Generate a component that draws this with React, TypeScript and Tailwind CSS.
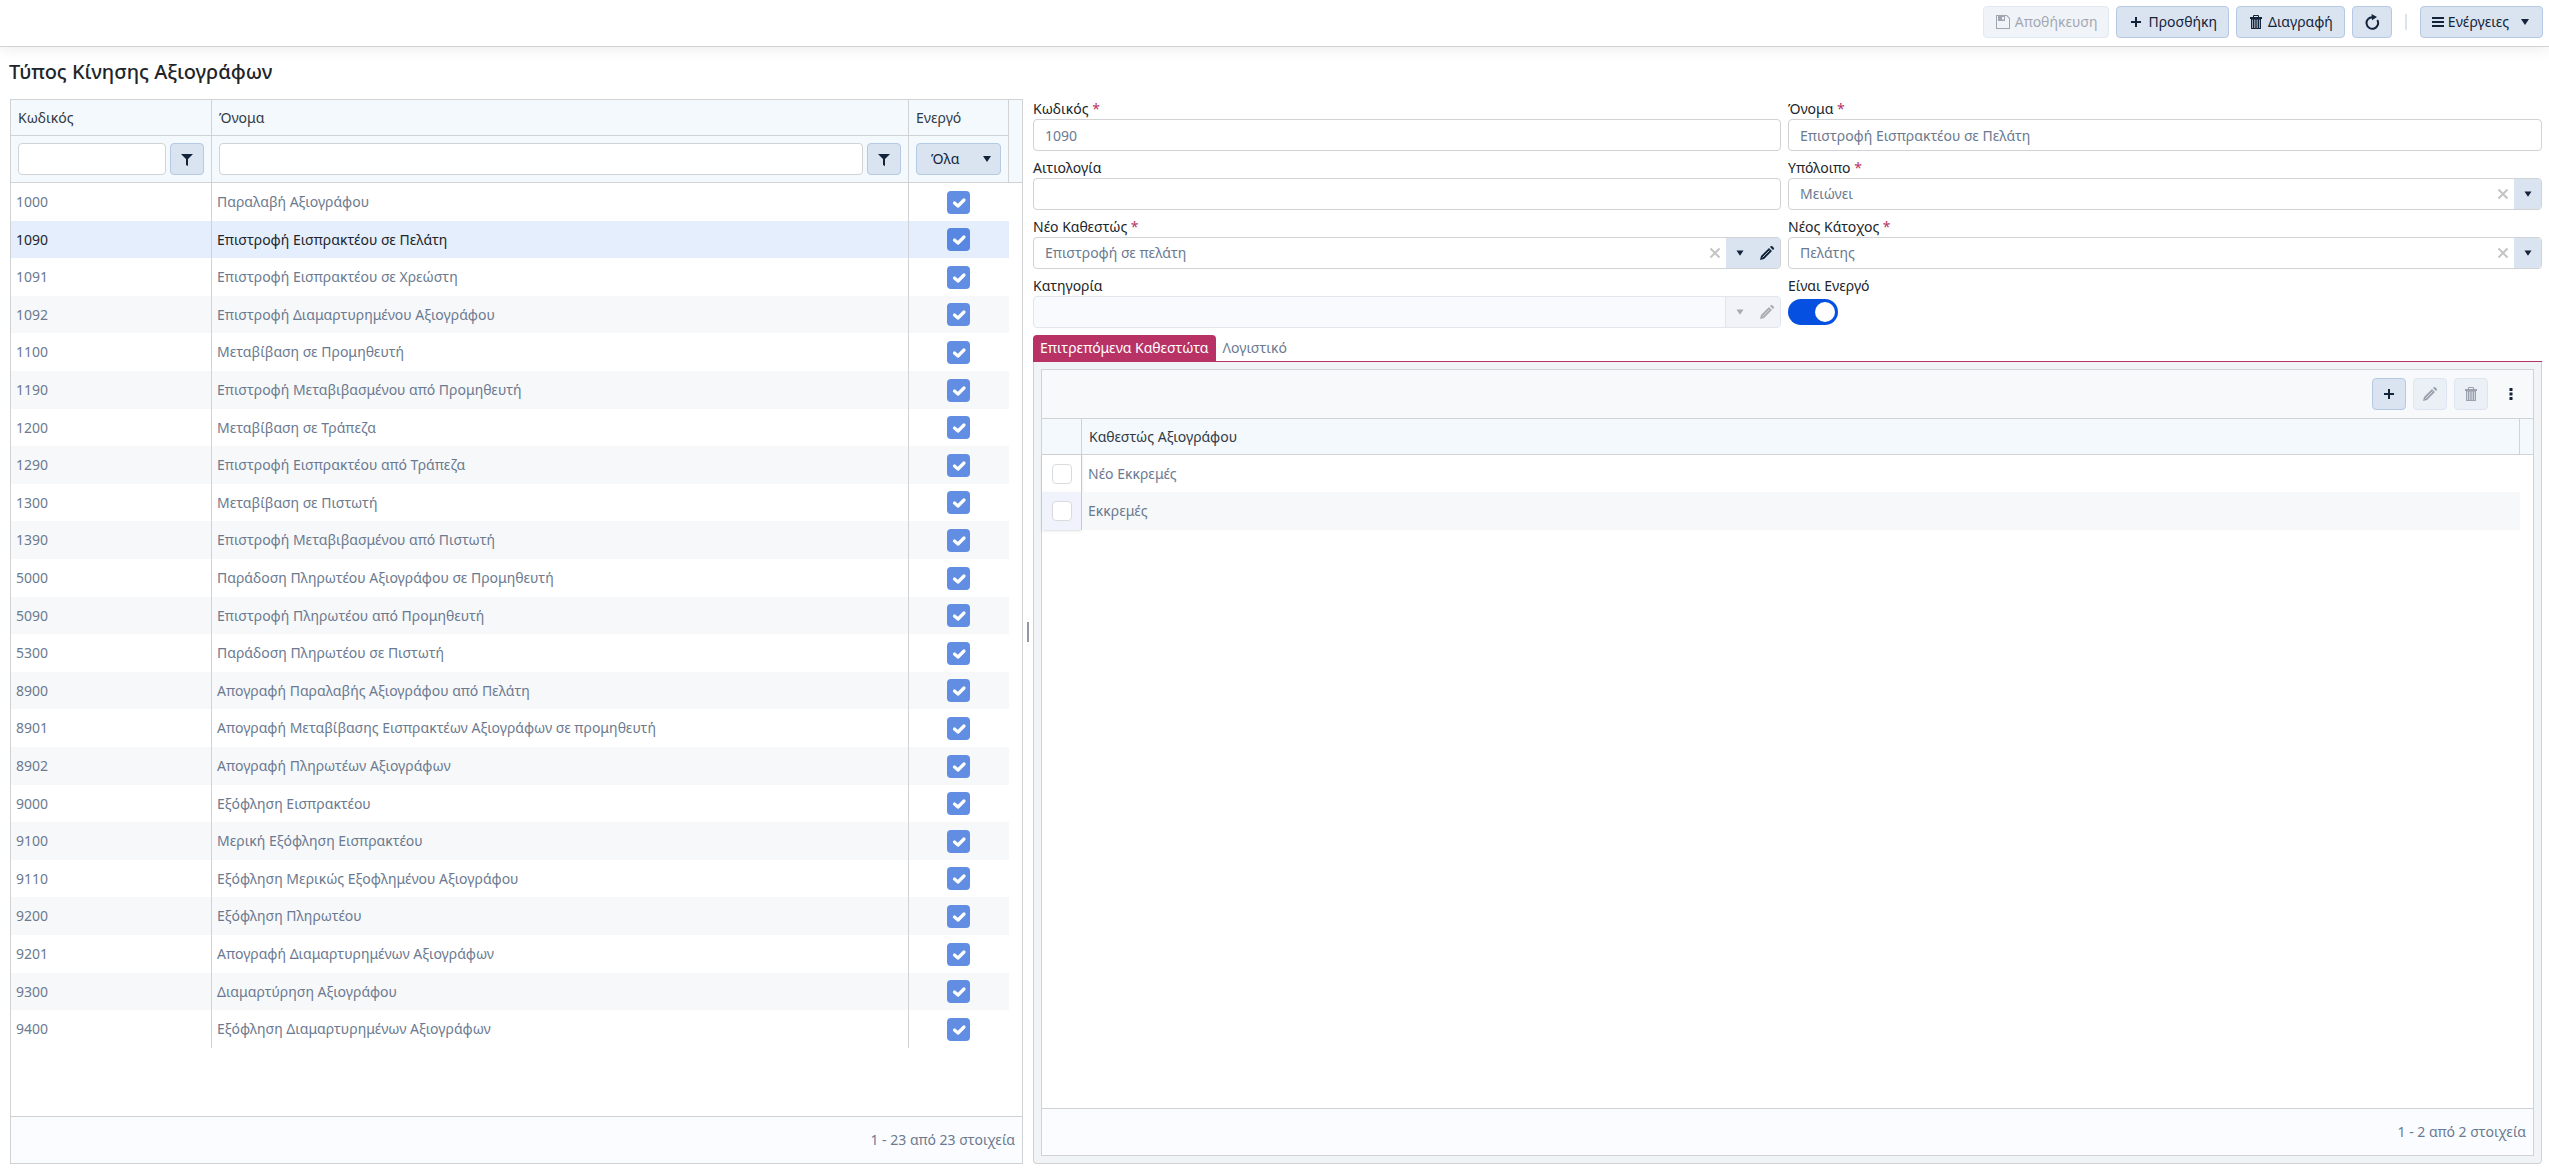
import { useState, type ReactNode } from "react";

const ROWS: [string, string][] = [
  ["1000", "Παραλαβή Αξιογράφου"],
  ["1090", "Επιστροφή Εισπρακτέου σε Πελάτη"],
  ["1091", "Επιστροφή Εισπρακτέου σε Χρεώστη"],
  ["1092", "Επιστροφή Διαμαρτυρημένου Αξιογράφου"],
  ["1100", "Μεταβίβαση σε Προμηθευτή"],
  ["1190", "Επιστροφή Μεταβιβασμένου από Προμηθευτή"],
  ["1200", "Μεταβίβαση σε Τράπεζα"],
  ["1290", "Επιστροφή Εισπρακτέου από Τράπεζα"],
  ["1300", "Μεταβίβαση σε Πιστωτή"],
  ["1390", "Επιστροφή Μεταβιβασμένου από Πιστωτή"],
  ["5000", "Παράδοση Πληρωτέου Αξιογράφου σε Προμηθευτή"],
  ["5090", "Επιστροφή Πληρωτέου από Προμηθευτή"],
  ["5300", "Παράδοση Πληρωτέου σε Πιστωτή"],
  ["8900", "Απογραφή Παραλαβής Αξιογράφου από Πελάτη"],
  ["8901", "Απογραφή Μεταβίβασης Εισπρακτέων Αξιογράφων σε προμηθευτή"],
  ["8902", "Απογραφή Πληρωτέων Αξιογράφων"],
  ["9000", "Εξόφληση Εισπρακτέου"],
  ["9100", "Μερική Εξόφληση Εισπρακτέου"],
  ["9110", "Εξόφληση Μερικώς Εξοφλημένου Αξιογράφου"],
  ["9200", "Εξόφληση Πληρωτέου"],
  ["9201", "Απογραφή Διαμαρτυρημένων Αξιογράφων"],
  ["9300", "Διαμαρτύρηση Αξιογράφου"],
  ["9400", "Εξόφληση Διαμαρτυρημένων Αξιογράφων"],
];

const STATUSES = ["Νέο Εκκρεμές", "Εκκρεμές"];

function Icon({ children, className = "size-4" }: { children: ReactNode; className?: string }) {
  return (
    <svg viewBox="0 0 16 16" aria-hidden="true" fill="currentColor" className={`shrink-0 ${className}`}>
      {children}
    </svg>
  );
}

const SaveIcon = () => (
  <Icon>
    <path fillRule="evenodd" d="M1 1h11l3 3v11H1zM2 2v12h12V4.500L11.500 2H10v5H3V2zM7 3v3h2V3z" />
    <path fillRule="evenodd" d="M3 1h7v6H3zM7 2.500v3h2v-3z" />
  </Icon>
);
const PlusIcon = () => (
  <Icon>
    <path d="M7 3h2v4h4v2H9v4H7V9H3V7h4z" />
  </Icon>
);
const TrashIcon = () => (
  <Icon>
    <path fillRule="evenodd" d="M6 1h4a1 1 0 0 1 1 1v1h3v2H2V3h3V2a1 1 0 0 1 1-1zM6 2v1h4V2z" />
    <path d="M3 5h10v10H3z" fillOpacity=".75" />
    <path d="M3.500 5v9.500h9V5M5.500 5v9M8 5v9M10.500 5v9" fill="none" stroke="currentColor" strokeWidth="1" />
    <path d="M4.500 6v8M6.800 6v8M9.200 6v8M11.500 6v8" fill="none" stroke="#dae3f0" strokeWidth=".6" />
  </Icon>
);
const ReloadIcon = () => (
  <Icon>
    <path d="M8.500 3.200A5.800 5.800 0 1 0 13.300 6" fill="none" stroke="currentColor" strokeWidth="2" />
    <path d="M7.500 0l5.500 3-5 3.200z" />
  </Icon>
);
const MenuIcon = () => (
  <Icon>
    <path d="M2 3h12v2H2zM2 7h12v2H2zM2 11h12v2H2z" />
  </Icon>
);
const CaretIcon = ({ className = "size-4" }: { className?: string }) => (
  <Icon className={className}>
    <path d="M4 5h8l-4 6z" />
  </Icon>
);
const FilterIcon = () => (
  <Icon>
    <path d="M2 3h12L9 8v7l-2-1V8z" />
  </Icon>
);
const PencilIcon = () => (
  <Icon>
    <path d="M1 15l1-4 8-8 3 3-8 8zM11 2l1-1h1l2 2v1l-1 1z" />
    <path d="M3.500 12.500l7-7" stroke="#dae3f0" strokeWidth=".8" />
  </Icon>
);
const KebabIcon = () => (
  <Icon>
    <path d="M6.500 2h3v3h-3zM6.500 6.500h3v3h-3zM6.500 11h3v3h-3z" />
  </Icon>
);
const ClearIcon = () => (
  <Icon>
    <path d="M3.500 3.500l9 9M12.500 3.500l-9 9" stroke="currentColor" strokeWidth="2" />
  </Icon>
);

const BUTTON_SIZE = {
  text: "gap-1 px-[11px]",
  menu: "gap-0.5 px-[9px]",
  icon: "w-[34px]",
};

function Button({ label, children, disabled, size = "text" }: { label?: string; children: ReactNode; disabled?: boolean; size?: keyof typeof BUTTON_SIZE }) {
  return (
    <button
      type="button"
      aria-label={label}
      disabled={disabled}
      className={`flex h-8 shrink-0 items-center justify-center rounded border border-[#b5c9e5] bg-[#dae3f0] text-[#13233a] disabled:opacity-40 ${BUTTON_SIZE[size]}`}
    >
      {children}
    </button>
  );
}

const FIELD = "block h-8 w-full min-w-0 rounded border border-[#d0d2d4] bg-white px-[11px] text-[#6b7a90] outline-none";

function Field({ id, label, required, children }: { id: string; label: string; required?: boolean; children: ReactNode }) {
  return (
    <div className="min-w-0">
      <label htmlFor={id} className="block h-5 leading-5 text-[#212529]">
        {label}
        {required && <span className="text-[#b83266]"> *</span>}
      </label>
      {children}
    </div>
  );
}

function Combo({ id, value, editable, disabled }: { id: string; value: string; editable?: boolean; disabled?: boolean }) {
  return (
    <div className={`flex h-8 overflow-hidden rounded border ${disabled ? "border-[#e1e5ee] bg-[#f9fafd]" : "border-[#d0d2d4] bg-white"}`}>
      <input id={id} defaultValue={value} disabled={disabled} className="min-w-0 flex-1 px-[11px] text-[#6b7a90] outline-none" />
      {!disabled && (
        <button type="button" aria-label="Καθαρισμός" className="flex w-[22px] items-center justify-center text-[#c4c4c4]">
          <ClearIcon />
        </button>
      )}
      <div className={`flex ${disabled ? "border-l border-[#e1e5ee] bg-[#f1f3f8] text-[#a9abb0]" : "bg-[#dae3f0] text-[#13233a]"}`}>
        <button type="button" aria-label="Άνοιγμα λίστας" disabled={disabled} className="flex w-[27px] items-center justify-center">
          <CaretIcon className="size-3.5" />
        </button>
        {editable && (
          <button type="button" aria-label="Επεξεργασία" disabled={disabled} className="flex w-[27px] items-center justify-center">
            <PencilIcon />
          </button>
        )}
      </div>
    </div>
  );
}

function Tick({ label, selected }: { label: string; selected: boolean }) {
  return (
    <span className="relative mx-auto block size-[23px]">
      <input
        type="checkbox"
        defaultChecked
        aria-label={label}
        className={`block size-[23px] appearance-none rounded ${selected ? "bg-[#5787e0]" : "bg-[#618ee2]"}`}
      />
      <svg viewBox="0 0 23 23" aria-hidden="true" className="pointer-events-none absolute inset-0 size-[23px]">
        <path d="M7.500 12l3.500 3 6-6" fill="none" stroke="#fff" strokeWidth="3.200" strokeLinecap="round" strokeLinejoin="round" />
      </svg>
    </span>
  );
}

function FilterBox({ label }: { label: string }) {
  return (
    <div className="flex gap-1 px-[7px]">
      <input aria-label={label} className={FIELD} />
      <Button label={`Φίλτρο ${label}`} size="icon">
        <FilterIcon />
      </Button>
    </div>
  );
}

function TypesGrid() {
  const [selected, setSelected] = useState("1090");
  return (
    <div className="flex min-h-0 min-w-0 flex-col border border-[#d0d2d4]">
      <div className="min-h-0 flex-1 overflow-hidden">
        <table className="w-full table-fixed border-separate border-spacing-0 text-left">
          <colgroup>
            <col className="w-[201px]" />
            <col />
            <col className="w-[100px]" />
            <col className="w-[13px]" />
          </colgroup>
          <thead className="bg-[#f3f9fc] text-[#313a46]">
            <tr className="h-9">
              <th scope="col" className="border-r border-b border-[#d0d2d4] px-[7px] font-normal">Κωδικός</th>
              <th scope="col" className="border-r border-b border-[#d0d2d4] px-[7px] font-normal">Όνομα</th>
              <th scope="col" className="border-r border-b border-[#d0d2d4] px-[7px] font-normal">Ενεργό</th>
              <td rowSpan={2} className="border-b border-[#d0d2d4]" />
            </tr>
            <tr className="h-[47px]">
              <td className="border-r border-b border-[#d0d2d4]"><FilterBox label="Κωδικός" /></td>
              <td className="border-r border-b border-[#d0d2d4]"><FilterBox label="Όνομα" /></td>
              <td className="border-r border-b border-[#d0d2d4] px-[7px]">
                <div className="relative">
                  <select aria-label="Ενεργό" className="block h-8 w-full appearance-none rounded border border-[#b5c9e5] bg-[#dae3f0] px-[14px] text-[#13233a]">
                    <option>Όλα</option>
                    <option>Ναι</option>
                    <option>Όχι</option>
                  </select>
                  <span className="pointer-events-none absolute inset-y-0 right-[6px] flex items-center text-[#13233a]">
                    <CaretIcon />
                  </span>
                </div>
              </td>
            </tr>
          </thead>
          <tbody>
            {ROWS.map(([code, name], i) => {
              const active = code === selected;
              const tone = active ? "bg-[#e4eefd] text-[#212529]" : i % 2 ? "bg-[#f7f8fa] text-[#6b7a90]" : "text-[#6b7a90]";
              return (
                <tr key={code} aria-selected={active} onClick={() => setSelected(code)} className="h-[38px] nth-[5n+2]:h-[37px] nth-[5n+4]:h-[37px]">
                  <td className={`border-r border-[#d0d2d4] px-[5px] py-0 ${tone}`}>{code}</td>
                  <td className={`border-r border-[#d0d2d4] px-[5px] py-0 ${tone}`}>{name}</td>
                  <td className={`py-0 pr-0.5 ${tone}`}><Tick label={`Ενεργό ${code}`} selected={active} /></td>
                  <td />
                </tr>
              );
            })}
          </tbody>
        </table>
      </div>
      <div className="flex h-[47px] shrink-0 items-center justify-end border-t border-[#d0d2d4] bg-[#fafcff] px-[7px] text-[#6b7a90]">
        1 - 23 από 23 στοιχεία
      </div>
    </div>
  );
}

function StatusGrid() {
  return (
    <div className="flex min-h-0 flex-1 flex-col border border-[#d0d2d4] bg-white">
      <div className="flex h-[49px] shrink-0 items-center justify-end gap-[7px] border-b border-[#d0d2d4] bg-[#f8f9fb] px-[6px]">
        <Button label="Προσθήκη" size="icon"><PlusIcon /></Button>
        <Button label="Επεξεργασία" size="icon" disabled><PencilIcon /></Button>
        <Button label="Διαγραφή" size="icon" disabled><TrashIcon /></Button>
        <button type="button" aria-label="Περισσότερα" className="flex size-8 items-center justify-center text-[#13233a]">
          <KebabIcon />
        </button>
      </div>
      <div className="min-h-0 flex-1">
        <table className="w-full table-fixed border-separate border-spacing-0 text-left">
          <colgroup>
            <col className="w-10" />
            <col />
            <col className="w-[13px]" />
          </colgroup>
          <thead className="bg-[#f3f9fc] text-[#313a46]">
            <tr className="h-9">
              <td className="border-r border-b border-[#d0d2d4]" />
              <th scope="col" className="border-r border-b border-[#d0d2d4] px-[7px] font-normal">Καθεστώς Αξιογράφου</th>
              <td className="border-b border-[#d0d2d4]" />
            </tr>
          </thead>
          <tbody>
            {STATUSES.map((status, i) => (
              <tr key={status} className="h-[38px] odd:h-[37px]">
                <td className={`border-r border-[#c6c9ce] py-0 shadow-sm ${i % 2 ? "bg-[#f0f3fb]" : "bg-white"}`}>
                  <input type="checkbox" aria-label={status} className="mx-auto block size-5 appearance-none rounded border border-[#d9dbdf] bg-white" />
                </td>
                <td className={`px-[6px] py-0 text-[#6b7a90] ${i % 2 ? "bg-[#f7f8fa]" : ""}`}>{status}</td>
                <td />
              </tr>
            ))}
          </tbody>
        </table>
      </div>
      <div className="flex h-[47px] shrink-0 items-center justify-end border-t border-[#d0d2d4] bg-[#fafcff] px-[7px] text-[#6b7a90]">
        1 - 2 από 2 στοιχεία
      </div>
    </div>
  );
}

export default function App() {
  return (
    <div className="flex h-screen flex-col bg-white font-['Noto_Sans',sans-serif] text-sm">
      <header className="flex h-[47px] shrink-0 items-start justify-end gap-[7px] border-b border-[#d0d2d4] px-[6px] pt-[6px] shadow-[0_2px_14px_rgba(0,0,0,0.08)]">
        <Button disabled><SaveIcon />Αποθήκευση</Button>
        <Button><PlusIcon />Προσθήκη</Button>
        <Button><TrashIcon />Διαγραφή</Button>
        <Button label="Ανανέωση"><ReloadIcon /></Button>
        <span className="mx-[6px] mt-2 h-4 w-0.5 bg-[#dde4ee]" />
        <Button size="menu">
          <MenuIcon />Ενέργειες
          <span className="ml-1.5 flex"><CaretIcon /></span>
        </Button>
      </header>
      <h1 className="h-[52px] shrink-0 pl-[9px] pt-[10px] text-xl leading-[30px] font-medium text-[#212529]">Τύπος Κίνησης Αξιογράφων</h1>
      <main className="grid min-h-0 flex-1 grid-cols-[1013fr_10px_1509fr] pr-[7px] pb-[6px] pl-[10px]">
        <TypesGrid />
        <div className="flex items-center justify-center">
          <span className="h-5 w-0.5 bg-[#8f98a8]" />
        </div>
        <section className="flex min-h-0 min-w-0 flex-col">
          <form className="grid grid-cols-[748fr_754fr] gap-[7px]">
            <Field id="code" label="Κωδικός" required><input id="code" defaultValue="1090" className={FIELD} /></Field>
            <Field id="name" label="Όνομα" required><input id="name" defaultValue="Επιστροφή Εισπρακτέου σε Πελάτη" className={FIELD} /></Field>
            <Field id="reason" label="Αιτιολογία"><input id="reason" className={FIELD} /></Field>
            <Field id="balance" label="Υπόλοιπο" required><Combo id="balance" value="Μειώνει" /></Field>
            <Field id="status" label="Νέο Καθεστώς" required><Combo id="status" value="Επιστροφή σε πελάτη" editable /></Field>
            <Field id="holder" label="Νέος Κάτοχος" required><Combo id="holder" value="Πελάτης" /></Field>
            <Field id="category" label="Κατηγορία"><Combo id="category" value="" editable disabled /></Field>
            <Field id="active" label="Είναι Ενεργό">
              <div className="flex h-8 items-center">
                <input
                  id="active"
                  type="checkbox"
                  role="switch"
                  defaultChecked
                  className="flex h-[26px] w-[50px] appearance-none items-center rounded-full bg-slate-300 px-[3px] before:size-5 before:rounded-full before:bg-white checked:justify-end checked:bg-[#0550e0]"
                />
              </div>
            </Field>
          </form>
          <div role="tablist" className="mt-[7px] flex shrink-0 border-b border-[#b83266]">
            <button type="button" role="tab" aria-selected="true" className="h-[26px] rounded-t bg-[#b83266] px-[7px] text-white">Επιτρεπόμενα Καθεστώτα</button>
            <button type="button" role="tab" aria-selected="false" className="h-[26px] px-[7px] text-[#6b7a90]">Λογιστικό</button>
          </div>
          <div role="tabpanel" className="flex min-h-0 flex-1 flex-col rounded-b border border-t-0 border-[#d0d2d4] bg-[#f1f4f6] p-[7px]">
            <StatusGrid />
          </div>
        </section>
      </main>
    </div>
  );
}
